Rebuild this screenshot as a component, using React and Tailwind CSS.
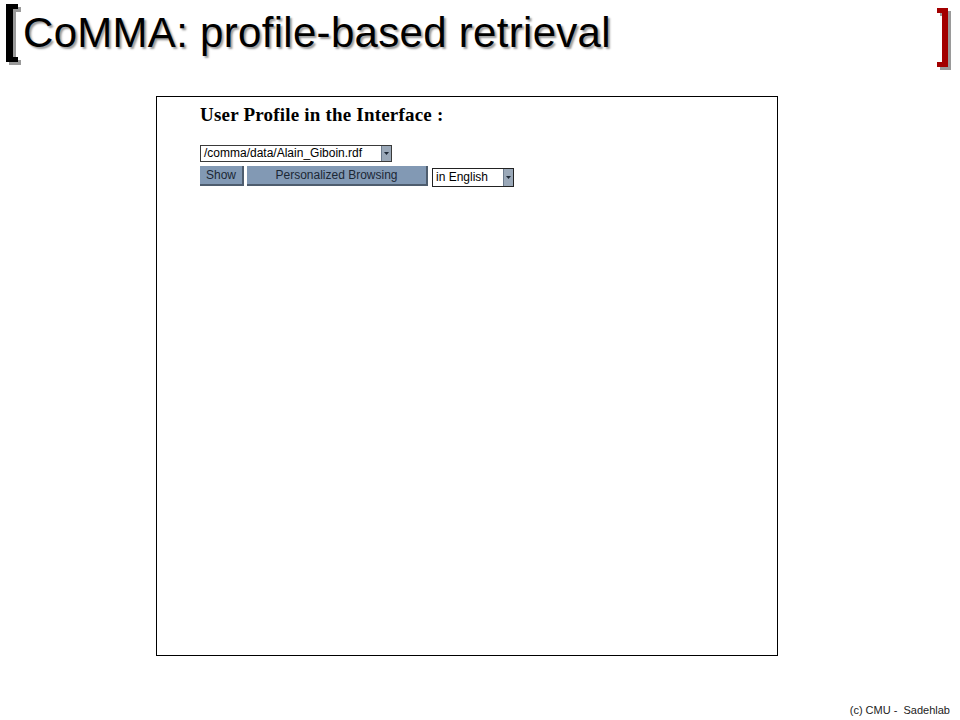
import React from "react";

const arial = { fontFamily: '"Liberation Sans", Arial, sans-serif' };

function Bracket({ side, color }) {
  // square bracket drawn as shapes, with a grey drop shadow
  const left = side === "left";
  const path = left
    ? "M0 0 H12 V5 H7 V53 H12 V58 H0 Z"
    : "M0 0 H11 V59 H0 V54 H5 V5 H0 Z";
  return (
    <svg width="18" height="64" viewBox="0 0 18 64" className="block">
      <path d={path} fill="#9a9a9a" transform="translate(3 3)" />
      <path d={path} fill={color} />
    </svg>
  );
}

function DropArrow() {
  return (
    <span className="flex h-full w-[10px] items-center justify-center bg-[#9aa8b8] border-l border-[#6b7a8c]">
      <svg width="5" height="3" viewBox="0 0 5 3">
        <path d="M0 0 H5 L2.5 3 Z" fill="#1f2937" />
      </svg>
    </span>
  );
}

export default function App() {
  return (
    <div className="relative w-[960px] h-[720px] bg-white overflow-hidden">
      {/* Title */}
      <div className="flex items-start justify-between pl-[6px] pr-[5px] pt-[4px]">
        <div className="flex items-start">
          <Bracket side="left" color="#000000" />
          <h1
            className="ml-[-1px] mt-[5px] text-[42px] leading-[48px] text-black tracking-[0.3px]"
            style={{ ...arial, textShadow: "2px 2px 2px #9a9a9a" }}
          >
            CoMMA: profile-based retrieval
          </h1>
        </div>
        <div className="mt-[4px]">
          <Bracket side="right" color="#a30000" />
        </div>
      </div>

      {/* Browser frame */}
      <div className="ml-[156px] mt-[24px] w-[622px] h-[560px] border-[1.5px] border-black bg-white pl-[43px] pt-[7px]">
        <h2
          className="text-[19px] font-bold text-black leading-[22px] tracking-[0.2px]"
          style={{ fontFamily: '"Liberation Serif", "Times New Roman", serif' }}
        >
          User Profile in the Interface :
        </h2>

        <div className="mt-[19px] flex h-[17px] w-[192px] items-stretch border border-[#3a3a3a] bg-white" style={arial}>
          <span className="flex-1 pl-[3px] text-[12px] leading-[15px] text-black">/comma/data/Alain_Giboin.rdf</span>
          <DropArrow />
        </div>

        <div className="mt-[4px] flex items-start" style={arial}>
          <button className="h-[20px] w-[44px] bg-[#8299b4] border-r-2 border-b-2 border-[#4e5d6e] text-[12px] text-[#1b2734]">
            Show
          </button>
          <button className="ml-[3px] h-[20px] w-[181px] bg-[#8299b4] border-r-2 border-b-2 border-[#4e5d6e] text-[12px] text-[#1b2734] pb-[3px]">
            Personalized Browsing
          </button>
          <div className="ml-[4px] mt-[2px] flex h-[19px] w-[82px] items-stretch border border-[#222] bg-white">
            <span className="flex-1 pl-[3px] text-[12px] leading-[17px] text-black">in English</span>
            <DropArrow />
          </div>
        </div>
      </div>

      {/* Footer */}
      <div className="absolute right-[10px] bottom-[2px] text-[11px] text-[#222]" style={arial}>
        (c) CMU -&nbsp; Sadehlab
      </div>
    </div>
  );
}
